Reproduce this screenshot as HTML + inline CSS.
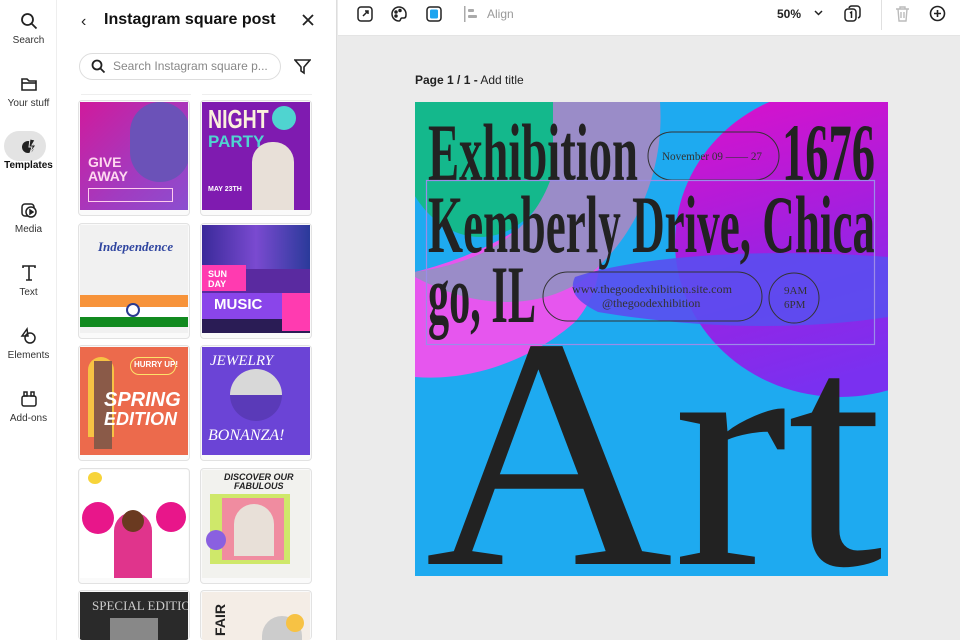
<!DOCTYPE html>
<html><head><meta charset="utf-8"><style>
*{margin:0;padding:0;box-sizing:border-box}
html{width:960px;height:640px;overflow:hidden}
body{width:960px;height:640px;overflow:hidden;background:#ebebeb;font-family:"Liberation Sans",sans-serif;position:relative}
.rail{position:absolute;left:0;top:0;width:57px;height:640px;background:#fff;border-right:1px solid #eee}
.ri{position:absolute;left:0;width:57px;text-align:center;font-size:10px;color:#333}
.ri svg{display:block;margin:0 auto 5px}
.panel{position:absolute;left:57px;top:0;width:280px;height:640px;background:#fff;border-right:1px solid #ddd;overflow:hidden}
.top{position:absolute;left:338px;top:0;width:622px;height:36px;background:#fff;border-bottom:1px solid #e4e4e4}
.card{position:absolute;width:112px;height:116px;border:1px solid #e2e2e2;border-radius:4px;background:#fafafa;overflow:hidden}
.card .im{position:absolute;left:1px;top:1px;width:108px;height:108px;overflow:hidden}
.t{position:absolute;font-weight:bold;white-space:nowrap}
</style></head><body>
<div class="rail">
 <div class="ri" style="top:12px"><svg width="18" height="18" viewBox="0 0 18 18" fill="none" stroke="#222" stroke-width="1.8"><circle cx="7.5" cy="7.5" r="5.5"/><path d="M11.5 11.5l5 5"/></svg>Search</div>
 <div class="ri" style="top:75px"><svg width="18" height="18" viewBox="0 0 18 18" fill="none" stroke="#222" stroke-width="1.6"><path d="M2 4h5l2 2h7v9H2z"/><path d="M2 8h14"/></svg>Your stuff</div>
 <div style="position:absolute;left:4px;top:131px;width:42px;height:30px;border-radius:15px;background:#e3e3e3"></div>
 <div class="ri" style="top:137px;font-weight:bold;color:#111"><svg width="18" height="18" viewBox="0 0 18 18"><circle cx="8" cy="10" r="6" fill="#222"/><path d="M10 2l5 1-3 5h4l-6 8 2-6h-3z" fill="#222" stroke="#e3e3e3" stroke-width="1"/></svg>Templates</div>
 <div class="ri" style="top:201px"><svg width="18" height="18" viewBox="0 0 18 18" fill="none" stroke="#222" stroke-width="1.5"><rect x="2" y="3" width="12" height="12" rx="3"/><circle cx="11" cy="11" r="5" fill="#fff"/><path d="M10 9v4l3-2z" fill="#222"/></svg>Media</div>
 <div class="ri" style="top:264px"><svg width="18" height="18" viewBox="0 0 18 18" fill="none" stroke="#222" stroke-width="1.6"><path d="M3 4V2h12v2M9 2v14M6 16h6"/></svg>Text</div>
 <div class="ri" style="top:327px"><svg width="18" height="18" viewBox="0 0 18 18" fill="none" stroke="#222" stroke-width="1.5"><path d="M7 2L2 9h6z"/><circle cx="10" cy="11" r="5"/></svg>Elements</div>
 <div class="ri" style="top:390px"><svg width="18" height="18" viewBox="0 0 18 18" fill="none" stroke="#222" stroke-width="1.5"><rect x="2" y="6" width="14" height="10" rx="2"/><rect x="4" y="2" width="3" height="4"/><rect x="11" y="2" width="3" height="4"/></svg>Add-ons</div>
</div>
<div class="panel">
 <div style="position:absolute;left:24px;top:13px;font-size:16px;color:#222">‹</div>
 <div style="position:absolute;left:47px;top:11px;font-size:16px;font-weight:bold;color:#111">Instagram square post</div>
 <svg style="position:absolute;left:245px;top:14px" width="12" height="12" viewBox="0 0 12 12" stroke="#222" stroke-width="1.8"><path d="M1 1l10 10M11 1L1 11"/></svg>
 <div style="position:absolute;left:22px;top:53px;width:202px;height:27px;border:1.5px solid #ddd;border-radius:14px"></div>
 <svg style="position:absolute;left:34px;top:59px" width="15" height="15" viewBox="0 0 15 15" fill="none" stroke="#222" stroke-width="1.8"><circle cx="6" cy="6" r="4.5"/><path d="M9.5 9.5l4 4"/></svg>
 <div style="position:absolute;left:56px;top:59px;font-size:12px;color:#888">Search Instagram square p...</div>
 <svg style="position:absolute;left:237px;top:58px" width="17" height="17" viewBox="0 0 17 17" fill="none" stroke="#222" stroke-width="1.6"><path d="M1 2h15l-6 7v6l-3-2V9z"/></svg>
 <div style="position:absolute;left:24px;top:94px;width:110px;height:1px;background:#eee"></div>
 <div style="position:absolute;left:145px;top:94px;width:110px;height:1px;background:#eee"></div>
<div class="card" style="left:21px;top:100px"><div class="im" style="background:linear-gradient(135deg,#d01a9c,#a23bc0 60%,#8b4fd0)"><div style="position:absolute;left:50px;top:0;width:60px;height:80px;border-radius:30px;background:#6b52b8"></div><div class="t" style="left:8px;top:52px;font-size:14px;color:#ffd8f0">GIVE</div><div class="t" style="left:8px;top:66px;font-size:14px;color:#ffd8f0">AWAY</div><div style="position:absolute;left:8px;top:86px;width:85px;height:14px;border:1px solid #fce;"></div></div></div>
<div class="card" style="left:143px;top:100px"><div class="im" style="background:#7f1bb0"><div class="t" style="left:6px;top:2px;font-size:26px;color:#fbf1dc;transform:scaleX(.75);transform-origin:left">NIGHT</div><div class="t" style="left:6px;top:30px;font-size:17px;color:#4fd4d0">PARTY</div><div style="position:absolute;left:70px;top:4px;width:24px;height:24px;border-radius:50%;background:#4fd4d0"></div><div style="position:absolute;left:50px;top:40px;width:42px;height:68px;background:#e8e0d8;border-radius:20px 20px 0 0"></div><div class="t" style="left:6px;top:84px;font-size:7px;color:#fff">MAY 23TH</div></div></div>
<div class="card" style="left:21px;top:223px"><div class="im" style="background:#f1f1f1"><div class="t" style="left:18px;top:14px;font-size:13px;color:#3046a0;font-style:italic;font-family:'Liberation Serif'">Independence</div><div style="position:absolute;left:0;top:70px;width:108px;height:12px;background:#f7933a"></div><div style="position:absolute;left:0;top:82px;width:108px;height:10px;background:#fff"></div><div style="position:absolute;left:0;top:92px;width:108px;height:10px;background:#118a1f"></div><div style="position:absolute;left:46px;top:78px;width:14px;height:14px;border-radius:50%;border:2px solid #2a3a90;background:#fff"></div></div></div>
<div class="card" style="left:143px;top:223px"><div class="im" style="background:#2a1c55"><div style="position:absolute;left:0;top:0;width:108px;height:44px;background:linear-gradient(90deg,#3a2a9a,#7a4ad0,#2a3a9a)"></div><div style="position:absolute;left:0;top:44px;width:108px;height:24px;background:#5a2aa0"></div><div style="position:absolute;left:0;top:40px;width:44px;height:26px;background:#ff3bb0"></div><div class="t" style="left:6px;top:44px;font-size:9px;color:#fff">SUN<br>DAY</div><div style="position:absolute;left:0;top:68px;width:108px;height:26px;background:#8a45ea"></div><div class="t" style="left:12px;top:71px;font-size:15px;color:#fff">MUSIC</div><div style="position:absolute;left:80px;top:68px;width:28px;height:38px;background:#ff3bb0"></div></div></div>
<div class="card" style="left:21px;top:345px"><div class="im" style="background:#ec6a4c"><div style="position:absolute;left:8px;top:10px;width:26px;height:80px;border-radius:13px 13px 0 0;background:#f7c244"></div><div style="position:absolute;left:14px;top:14px;width:18px;height:88px;background:#8a5a48"></div><div style="position:absolute;left:50px;top:10px;width:46px;height:18px;border:1.5px solid #fde26a;border-radius:9px"></div><div class="t" style="left:54px;top:13px;font-size:8px;color:#fff">HURRY UP!</div><div class="t" style="left:24px;top:42px;font-size:20px;color:#fff;font-style:italic">SPRING</div><div class="t" style="left:24px;top:62px;font-size:18px;color:#fff;font-style:italic">EDITION</div></div></div>
<div class="card" style="left:143px;top:345px"><div class="im" style="background:#6b44d6"><div class="t" style="left:8px;top:6px;font-size:15px;color:#fff;font-style:italic;font-family:'Liberation Serif';font-weight:normal">JEWELRY</div><div style="position:absolute;left:28px;top:22px;width:52px;height:52px;border-radius:50%;background:linear-gradient(#d8d8d8 50%,#5a3ab8 50%)"></div><div class="t" style="left:6px;top:80px;font-size:16px;color:#fff;font-style:italic;font-family:'Liberation Serif';font-weight:normal">BONANZA!</div></div></div>
<div class="card" style="left:21px;top:468px"><div class="im" style="background:#fff"><div style="position:absolute;left:2px;top:32px;width:32px;height:32px;border-radius:50%;background:#e8168a"></div><div style="position:absolute;left:76px;top:32px;width:30px;height:30px;border-radius:50%;background:#e8168a"></div><div style="position:absolute;left:34px;top:42px;width:38px;height:66px;border-radius:19px 19px 0 0;background:#e0348c"></div><div style="position:absolute;left:42px;top:40px;width:22px;height:22px;border-radius:50%;background:#6a3a20"></div><div style="position:absolute;left:8px;top:2px;width:14px;height:12px;background:#f7d43a;border-radius:50%"></div></div></div>
<div class="card" style="left:143px;top:468px"><div class="im" style="background:#f2f2ee"><div class="t" style="left:22px;top:2px;font-size:9px;color:#222;font-style:italic">DISCOVER OUR</div><div class="t" style="left:32px;top:11px;font-size:9px;color:#222;font-style:italic">FABULOUS</div><div style="position:absolute;left:8px;top:24px;width:80px;height:70px;background:#cfe86a"></div><div style="position:absolute;left:20px;top:28px;width:62px;height:62px;background:#f08ca0"></div><div style="position:absolute;left:32px;top:34px;width:40px;height:52px;background:#e8e0d8;border-radius:20px 20px 0 0"></div><div style="position:absolute;left:4px;top:60px;width:20px;height:20px;border-radius:50%;background:#8a60e0"></div></div></div>
<div class="card" style="left:21px;top:590px;height:50px;border-bottom:none"><div class="im" style="background:#2a2a2a;height:49px"><div class="t" style="left:12px;top:6px;font-size:13px;color:#ccc;font-family:'Liberation Serif';font-weight:normal">SPECIAL EDITION</div><div style="position:absolute;left:30px;top:26px;width:48px;height:23px;background:#888"></div></div></div>
<div class="card" style="left:143px;top:590px;height:50px;border-bottom:none"><div class="im" style="background:#f4ede6;height:49px"><div class="t" style="left:2px;top:20px;font-size:14px;color:#222;transform:rotate(-90deg)">FAIR</div><div style="position:absolute;left:60px;top:24px;width:40px;height:25px;border-radius:20px 20px 0 0;background:#ccc"></div><div style="position:absolute;left:84px;top:22px;width:18px;height:18px;border-radius:50%;background:#f7c244"></div></div></div>
</div>

<div class="top">
 <svg style="position:absolute;left:19px;top:6px" width="16" height="16" viewBox="0 0 16 16" fill="none" stroke="#222" stroke-width="1.5"><rect x="1" y="1" width="14" height="14" rx="3"/><path d="M6 10l5-5M8 5h3v3"/></svg>
 <svg style="position:absolute;left:53px;top:6px" width="16" height="16" viewBox="0 0 16 16" fill="none" stroke="#222" stroke-width="1.5"><path d="M8 1a7 7 0 100 14c2 0 1-3 3-3h2c2 0 2-2 2-4A7 7 0 008 1z"/><circle cx="5" cy="6" r="1" fill="#222"/><circle cx="9" cy="4.5" r="1" fill="#222"/><circle cx="5" cy="10" r="1" fill="#222"/></svg>
 <svg style="position:absolute;left:88px;top:6px" width="16" height="16" viewBox="0 0 16 16"><rect x="1" y="1" width="14" height="14" rx="3" fill="none" stroke="#222" stroke-width="1.5"/><rect x="4" y="3.5" width="8" height="9" rx="1.5" fill="#1ea5f0"/></svg>
 <svg style="position:absolute;left:126px;top:6px" width="14" height="16" viewBox="0 0 14 16" fill="#aaa"><rect x="0" y="0" width="1.5" height="16"/><rect x="4" y="3" width="6" height="3" rx="1"/><rect x="4" y="9" width="9" height="3" rx="1"/></svg>
 <div style="position:absolute;left:149px;top:7px;font-size:12px;color:#999">Align</div>
 <div style="position:absolute;left:439px;top:7px;font-size:12px;color:#222;font-weight:bold">50%</div>
 <svg style="position:absolute;left:476px;top:10px" width="9" height="6" viewBox="0 0 9 6" fill="none" stroke="#222" stroke-width="1.5"><path d="M1 1l3.5 3.5L8 1"/></svg>
 <svg style="position:absolute;left:506px;top:5px" width="17" height="17" viewBox="0 0 17 17" fill="none" stroke="#222" stroke-width="1.5"><rect x="1" y="4" width="11" height="12" rx="3"/><path d="M5 3a3 3 0 013-2h5a3 3 0 013 3v6a3 3 0 01-2 3"/><path d="M6 8l1.5-1v6"/></svg>
 <div style="position:absolute;left:543px;top:0;width:1px;height:30px;background:#e0e0e0"></div>
 <svg style="position:absolute;left:557px;top:6px" width="15" height="16" viewBox="0 0 15 16" fill="none" stroke="#bbb" stroke-width="1.4"><path d="M1 3h13M5 3V1h5v2M3 3l1 12h7l1-12M6 6v6M9 6v6"/></svg>
 <svg style="position:absolute;left:591px;top:5px" width="17" height="17" viewBox="0 0 17 17" fill="none" stroke="#222" stroke-width="1.6"><circle cx="8.5" cy="8.5" r="7"/><path d="M8.5 5v7M5 8.5h7"/></svg>
</div>
<div style="position:absolute;left:415px;top:73px;font-size:12px;color:#222"><b>Page 1 / 1 -</b> Add title</div>

<svg style="position:absolute;left:415px;top:102px" width="473" height="474" viewBox="0 0 473 474">
 <defs><linearGradient id="mg" x1="0" y1="0" x2="0.3" y2="1"><stop offset="0" stop-color="#e010c8"/><stop offset="0.55" stop-color="#a020e0"/><stop offset="1" stop-color="#7a30f0"/></linearGradient></defs>
 <rect width="473" height="474" fill="#1eaaf0"/>
 <ellipse cx="425" cy="140" rx="165" ry="155" fill="url(#mg)"/>
 <path d="M0 170c60-15 120-45 160-90 30 50 35 100 0 140-40 35-100 60-160 55z" fill="#e656ee"/>
 <ellipse cx="65" cy="20" rx="85" ry="115" fill="#14b88c"/>
 <path d="M138 0h107c5 70-25 140-80 180-40 25-100 30-165-5V170c70-10 120-40 138-100z" fill="#9a8cc8"/>
 <path d="M160 175c60-20 180-30 313-20v60c-100 15-200 10-290-5-20-10-30-20-23-35z" fill="#5a4ef0" opacity="0.9"/>
 <g fill="#222" font-family="Liberation Serif" font-weight="bold">
  <text x="13" y="78" font-size="82" textLength="210" lengthAdjust="spacingAndGlyphs">Exhibition</text>
  <text x="367" y="78" font-size="82" textLength="93" lengthAdjust="spacingAndGlyphs">1676</text>
  <text x="13" y="150" font-size="82" textLength="447" lengthAdjust="spacingAndGlyphs">Kemberly Drive, Chica</text>
  <text x="13" y="220" font-size="82" textLength="108" lengthAdjust="spacingAndGlyphs">go, IL</text>
 </g>
 <g fill="#222" font-family="Liberation Serif">
  <text x="10" y="462" font-size="330" textLength="458" lengthAdjust="spacingAndGlyphs">Art</text>
  <text x="247" y="58" font-size="12" fill="#333" textLength="100" lengthAdjust="spacingAndGlyphs">November 09 ―― 27</text>
  <text x="157" y="191" font-size="12" fill="#333" textLength="160" lengthAdjust="spacingAndGlyphs">www.thegoodexhibition.site.com</text>
  <text x="187" y="205" font-size="12" fill="#333">@thegoodexhibition</text>
  <text x="369" y="192" font-size="11" fill="#333">9AM</text>
  <text x="369" y="206" font-size="11" fill="#333">6PM</text>
 </g>
 <g fill="none" stroke="#333" stroke-width="1">
  <rect x="233" y="30" width="131" height="48" rx="24"/>
  <rect x="128" y="170" width="219" height="49" rx="24.5"/>
  <circle cx="379" cy="196" r="25"/>
 </g>
 <rect x="11.5" y="78.5" width="448" height="164" fill="none" stroke="#9b8ce8" stroke-width="1.2"/>
</svg>
</body></html>
